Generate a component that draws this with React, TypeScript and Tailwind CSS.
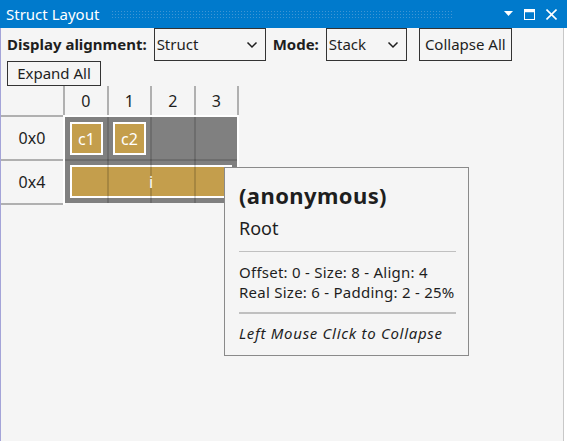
import React from 'react';

const font = { fontFamily: '"Noto Sans", "Open Sans", sans-serif' };

function Chevron() {
  return (
    <svg className="w-[12px] h-[8px]" viewBox="0 0 12 8" fill="none" stroke="#1e1e1e" strokeWidth={1.5}>
      <polyline points="1.5,1.5 6,6 10.5,1.5" />
    </svg>
  );
}

function Select({ value, width }: { value: string; width: string }) {
  return (
    <div className={`${width} h-[33px] border border-[#333] flex items-center justify-between pl-[2px] pr-[7px] text-[15px] text-[#1e1e1e]`}>
      <span>{value}</span>
      <Chevron />
    </div>
  );
}

function Field({ label, span }: { label: string; span?: boolean }) {
  return (
    <div className={`${span ? 'col-span-4' : ''} p-[5px]`}>
      <div className="w-full h-full bg-[#c49e4c] border-2 border-white flex items-center justify-center text-white text-[16px]">
        <span className="relative z-10">{label}</span>
      </div>
    </div>
  );
}

export default function App() {
  const cols = ['0', '1', '2', '3'];
  return (
    <div className="w-[567px] h-[441px] bg-white relative overflow-hidden" style={font}>
      {/* Title bar */}
      <div className="h-[28px] bg-[#007acc] flex items-center pl-[6px] pr-[10px] text-white">
        <span className="text-[15px] leading-none">Struct Layout</span>
        <div className="ml-[12px] w-[341px] h-[8px] bg-[radial-gradient(circle,#3f95d4_0.8px,transparent_1px)] bg-[length:3px_3px]"></div>
        <div className="ml-auto flex items-center gap-[11px]">
          <svg className="w-[9px] h-[6px]" viewBox="0 0 9 6"><polygon points="0,0 9,0 4.5,5" fill="white" /></svg>
          <svg className="w-[11px] h-[11px]" viewBox="0 0 11 11" fill="none" stroke="white">
            <rect x="0.5" y="0.5" width="10" height="10" strokeWidth={1} />
            <line x1="0" y1="2" x2="11" y2="2" strokeWidth={2.5} />
          </svg>
          <svg className="w-[11px] h-[11px]" viewBox="0 0 11 11" stroke="white" strokeWidth={1.6}>
            <line x1="0.5" y1="0.5" x2="10.5" y2="10.5" />
            <line x1="10.5" y1="0.5" x2="0.5" y2="10.5" />
          </svg>
        </div>
      </div>

      {/* Body */}
      <div className="w-[564px] h-[413px] bg-[#f5f5f5] border-l border-[#a4a4d8] border-r border-r-[#c8c8c8] relative">
        {/* Toolbar */}
        <div className="flex items-center pl-[6px] h-[33px]">
          <span className="text-[15px] font-bold text-[#1e1e1e]">Display alignment:</span>
          <div className="ml-[7px]"><Select value="Struct" width="w-[112px]" /></div>
          <span className="ml-[7px] text-[15px] font-bold text-[#1e1e1e]">Mode:</span>
          <div className="ml-[7px]"><Select value="Stack" width="w-[81px]" /></div>
          <div className="ml-[12px] w-[93px] h-[33px] border border-[#333] flex items-center justify-center text-[15px] text-[#1e1e1e]">
            Collapse All
          </div>
        </div>
        <div className="pl-[6px]">
          <div className="w-[94px] h-[25px] border border-[#333] flex items-center justify-center text-[15px] text-[#1e1e1e]">
            Expand All
          </div>
        </div>

        {/* Grid */}
        <div className="flex h-[29px]">
          <div className="w-[64px] border-r-2 border-[#b0b0b0]"></div>
          {cols.map((c) => (
            <div key={c} className="w-[43.5px] border-r-2 border-[#b0b0b0] flex items-center justify-center text-[16px] text-[#1e1e1e]">
              {c}
            </div>
          ))}
        </div>
        <div className="flex">
          <div className="w-[62px] border-t-2 border-[#b0b0b0]">
            <div className="h-[44px] border-b-2 border-[#b0b0b0] flex items-center justify-center text-[16px] text-[#1e1e1e]">0x0</div>
            <div className="h-[44px] border-b-2 border-[#b0b0b0] flex items-center justify-center text-[16px] text-[#1e1e1e]">0x4</div>
          </div>
          <div className="w-[176px] border-2 border-b-0 border-white">
            <div className="relative w-[172px] h-[86px] bg-[#808080] grid grid-cols-4 grid-rows-2">
              <Field label="c1" />
              <Field label="c2" />
              <div></div>
              <div></div>
              <Field label="i" span />
              <div className="absolute left-[42px] top-0 w-[2px] h-full bg-black/15"></div>
              <div className="absolute left-[85px] top-0 w-[2px] h-full bg-black/15"></div>
              <div className="absolute left-[129px] top-0 w-[2px] h-full bg-black/15"></div>
              <div className="absolute left-0 top-[42px] w-full h-[2px] bg-black/15"></div>
            </div>
          </div>
        </div>

        {/* Tooltip */}
        <div className="absolute left-[223px] top-[139px] w-[245px] h-[189px] bg-[#f5f5f5] border border-[#8a8a8a] pl-[14px] pr-[12px] pt-[12px] text-[#1e1e1e]">
          <div className="text-[22px] font-bold leading-[30px] tracking-[0.4px]">(anonymous)</div>
          <div className="text-[18px] leading-[26px] mt-[5px]">Root</div>
          <div className="h-px bg-[#c0c0c0] mt-[10px]"></div>
          <div className="text-[15px] leading-[20px] mt-[10px] tracking-[0.25px]">Offset: 0 - Size: 8 - Align: 4</div>
          <div className="text-[15px] leading-[20px] tracking-[0.25px]">Real Size: 6 - Padding: 2 - 25%</div>
          <div className="h-[2px] bg-[#c0c0c0] mt-[10px]"></div>
          <div className="text-[15px] leading-[20px] italic mt-[9px] tracking-[0.7px]">Left Mouse Click to Collapse</div>
        </div>
      </div>
    </div>
  );
}
